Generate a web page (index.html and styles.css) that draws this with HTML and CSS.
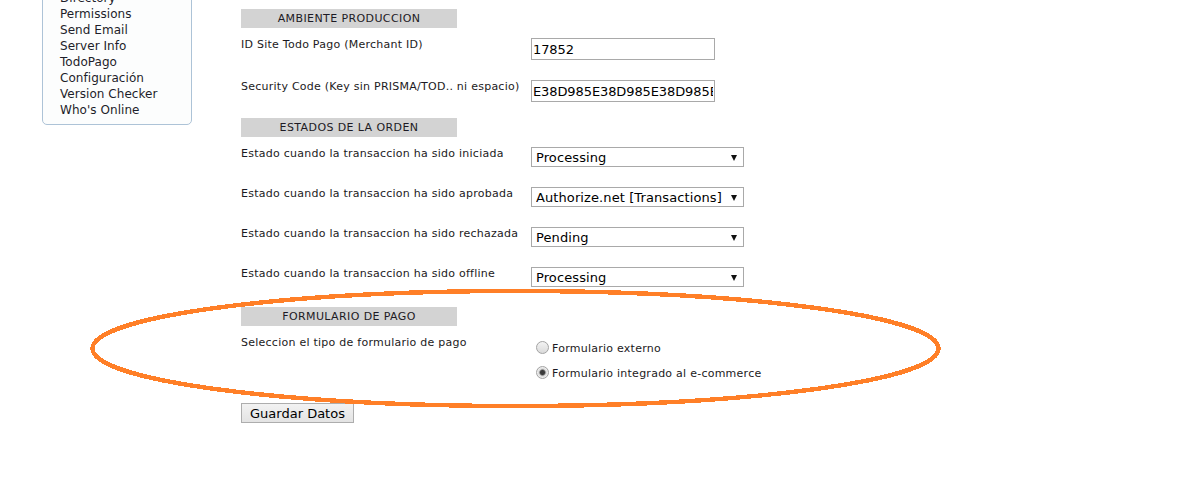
FILE: index.html
```html
<!DOCTYPE html>
<html lang="es">
<head>
<meta charset="utf-8">
<title>TodoPago - Configuración</title>
<link rel="stylesheet" href="styles.css">
</head>
<body>
<div class="page">
  <aside class="sidebar">
    <ul class="menu">
      <li>Directory</li>
      <li>Permissions</li>
      <li>Send Email</li>
      <li>Server Info</li>
      <li>TodoPago</li>
      <li>Configuración</li>
      <li>Version Checker</li>
      <li>Who's Online</li>
    </ul>
  </aside>

  <main class="content">
    <section class="section section-env">
      <div class="section-title">AMBIENTE PRODUCCION</div>
      <div class="rows">
        <div class="form-row">
          <label class="field-label">ID Site Todo Pago (Merchant ID)</label>
          <div class="field"><input class="text-input" type="text" value="17852"></div>
        </div>
        <div class="form-row">
          <label class="field-label">Security Code (Key sin PRISMA/TOD.. ni espacio)</label>
          <div class="field"><input class="text-input" type="text" value="E38D985E38D985E38D985E38D985E38D985"></div>
        </div>
      </div>
    </section>

    <section class="section section-states">
      <div class="section-title">ESTADOS DE LA ORDEN</div>
      <div class="rows">
        <div class="form-row">
          <label class="field-label">Estado cuando la transaccion ha sido iniciada</label>
          <div class="field"><div class="select-wrap"><select class="select"><option>Processing</option></select></div></div>
        </div>
        <div class="form-row">
          <label class="field-label">Estado cuando la transaccion ha sido aprobada</label>
          <div class="field"><div class="select-wrap"><select class="select"><option>Authorize.net [Transactions]</option></select></div></div>
        </div>
        <div class="form-row">
          <label class="field-label">Estado cuando la transaccion ha sido rechazada</label>
          <div class="field"><div class="select-wrap"><select class="select"><option>Pending</option></select></div></div>
        </div>
        <div class="form-row">
          <label class="field-label">Estado cuando la transaccion ha sido offline</label>
          <div class="field"><div class="select-wrap"><select class="select"><option>Processing</option></select></div></div>
        </div>
      </div>
    </section>

    <section class="section section-form">
      <div class="section-title">FORMULARIO DE PAGO</div>
      <div class="rows">
        <div class="form-row">
          <label class="field-label">Seleccion el tipo de formulario de pago</label>
          <div class="field radio-group">
            <label class="radio-option"><input class="radio" type="radio" name="tipo"> <span>Formulario externo</span></label>
            <label class="radio-option"><input class="radio" type="radio" name="tipo" checked> <span>Formulario integrado al e-commerce</span></label>
          </div>
        </div>
      </div>
    </section>

    <button class="btn" type="button">Guardar Datos</button>
  </main>

  <svg class="highlight" width="1196" height="503" viewBox="0 0 1196 503" shape-rendering="crispEdges">
    <ellipse cx="515.5" cy="348.5" rx="423" ry="57.5" fill="none" stroke="#ff7f27" stroke-width="4.4"/>
  </svg>
</div>
</body>
</html>
```

FILE: styles.css
```css
html, body {
  margin: 0;
  padding: 0;
  background: #ffffff;
}

body {
  font-family: "DejaVu Sans", Verdana, sans-serif;
  color: #1c1c1c;
  overflow: hidden;
  width: 1196px;
  height: 503px;
}

.page {
  position: relative;
  display: flex;
  align-items: flex-start;
  width: 1196px;
  height: 503px;
}

/* Sidebar */
.sidebar {
  box-sizing: border-box;
  width: 150px;
  margin-left: 42px;
  margin-top: -20px;
  padding: 9px 0 6px 17px;
  border: 1px solid #adc3d7;
  border-radius: 0 0 5px 5px;
  background: #fcfdfd;
  flex: none;
}

.menu {
  list-style: none;
  margin: 0;
  padding: 0;
  font-size: 12px;
  line-height: 16px;
  color: #1e1e2a;
  letter-spacing: 0.05px;
}

.menu li {
  white-space: nowrap;
}

/* Main content */
.content {
  margin-left: 49px;
  padding-top: 9px;
  display: flex;
  flex-direction: column;
  align-items: flex-start;
}

.section-title {
  width: 216px;
  height: 19px;
  line-height: 19px;
  background: #d3d3d3;
  text-align: center;
  font-size: 11px;
  letter-spacing: 0.4px;
  color: #1d1a24;
  margin-bottom: 10px;
}

.rows {
  display: flex;
  flex-direction: column;
  gap: 20px;
}

.section-env { margin-bottom: 16px; }
.section-states { margin-bottom: 20px; }
.section-form { margin-bottom: 24px; }

.form-row {
  display: grid;
  grid-template-columns: 290px auto;
  align-items: start;
}

.field-label {
  font-size: 11px;
  line-height: 14px;
  letter-spacing: 0.25px;
  color: #1c1a22;
  white-space: nowrap;
}

.text-input {
  box-sizing: border-box;
  width: 184px;
  height: 22px;
  margin: 0;
  padding: 0 1px;
  border: 1px solid #a9a9a9;
  font-family: "DejaVu Sans", Verdana, sans-serif;
  font-size: 13px;
  letter-spacing: -0.1px;
  color: #000;
  background: #fff;
  outline: none;
}

.select-wrap {
  position: relative;
  width: 213px;
}

.select-wrap::after {
  content: "";
  position: absolute;
  right: 7px;
  top: 8px;
  border-left: 3.5px solid transparent;
  border-right: 3.5px solid transparent;
  border-top: 6px solid #111;
  pointer-events: none;
}

.select {
  -webkit-appearance: none;
  appearance: none;
  box-sizing: border-box;
  display: block;
  width: 213px;
  height: 20px;
  margin: 0;
  padding: 0 0 0 4px;
  border: 1px solid #a9a9a9;
  border-radius: 0;
  background: #fff;
  font-family: "DejaVu Sans", Verdana, sans-serif;
  font-size: 13px;
  letter-spacing: 0.1px;
  color: #000;
  outline: none;
}

/* Radios */
.radio-group {
  display: flex;
  flex-direction: column;
  gap: 12px;
  padding-top: 5px;
}

.radio-option {
  display: flex;
  align-items: center;
  height: 13px;
  font-size: 11px;
  letter-spacing: 0.25px;
  color: #1c1a22;
  white-space: nowrap;
}

.radio-option span {
  margin-top: 1px;
}

.radio {
  -webkit-appearance: none;
  appearance: none;
  box-sizing: border-box;
  width: 13px;
  height: 13px;
  margin: 0 3px 0 5px;
  border: 1px solid #a3a3a3;
  border-radius: 50%;
  background: linear-gradient(#f3f3f3, #dadada);
  flex: none;
}

.radio:checked {
  background: radial-gradient(circle, #3a3a3a 0 2px, #6a6a6a 2.6px, #d6d6d6 3.6px, #eeeeee 5px, #dedede 100%);
}

/* Button */
.btn {
  box-sizing: border-box;
  width: 113px;
  height: 20px;
  margin: 0;
  padding: 0;
  border: 1px solid #adadad;
  border-radius: 0;
  background: linear-gradient(#f2f2f2, #e3e3e3);
  font-family: "DejaVu Sans", Verdana, sans-serif;
  font-size: 13px;
  color: #000;
}

/* Hand-drawn highlight annotation */
.highlight {
  position: absolute;
  left: 0;
  top: 0;
  pointer-events: none;
}
```
